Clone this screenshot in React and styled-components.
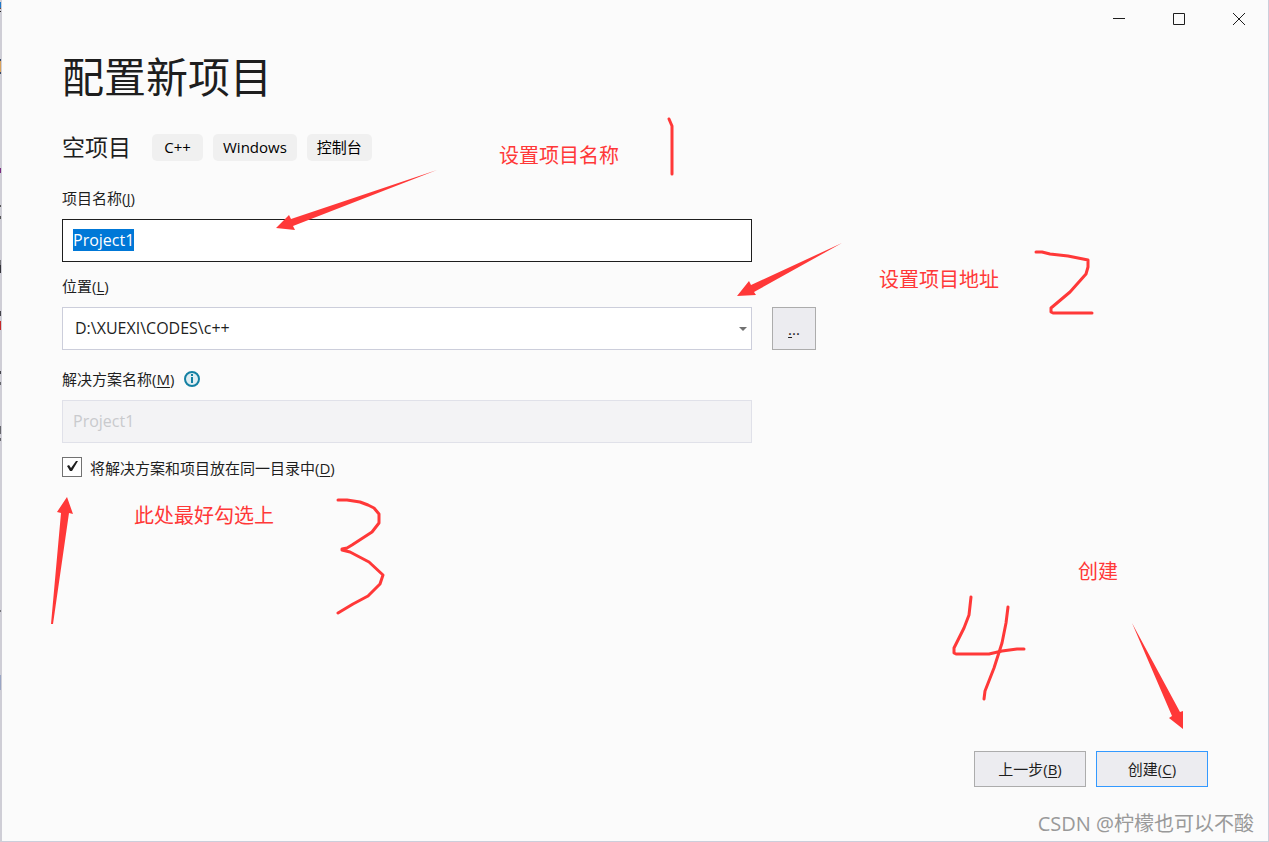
import React, { useEffect, useRef, useState } from "react";
import styled, { createGlobalStyle } from "styled-components";

const tags = ["C++", "Windows", "控制台"];

const notes = [
  { text: "设置项目名称", left: 499, top: 142 },
  { text: "设置项目地址", left: 879, top: 266 },
  { text: "此处最好勾选上", left: 134, top: 502 },
  { text: "创建", left: 1078, top: 558 },
];

const arrows = [
  "276,228 289,215 291,219 437,170 293,226 295,230",
  "737,296 749,281 751,285 842,243 754,292 756,295",
  "67,497 57,512 61,513 51,624 53,624 69,513 73,514",
  "1183,729 1183,711 1180,712 1132,623 1172,716 1169,718",
];

const strokes = [
  "669,119 672,126 672,174",
  "1036,252 1042,252 1050,254 1068,256 1088,260 1088,267 1086,274 1070,292 1051,308 1051,312 1053,313 1092,313",
  "338,500 347,500 360,502 368,505 374,508 379,514 379,523 372,532 352,545 347,548 342,549 342,550 350,552 369,562 383,575 380,584 368,596 353,604 338,613",
  "971,597 969,615 964,628 954,648 954,653 956,654 989,654 1002,651 1017,649 1024,649",
  "1008,607 1006,623 1002,643 994,668 985,691 984,699",
];

const App = () => {
  const [name, setName] = useState("Project1");
  const [sameFolder, setSameFolder] = useState(true);
  const nameRef = useRef(null);

  useEffect(() => {
    nameRef.current.focus();
    nameRef.current.select();
  }, []);

  return (
    <Window>
      <GlobalStyle />
      <TitleBar>
        <CaptionButton aria-label="最小化">
          <svg width="14" height="14" viewBox="0 0 14 14">
            <path d="M1 6.5h12" />
          </svg>
        </CaptionButton>
        <CaptionButton aria-label="最大化">
          <svg width="14" height="14" viewBox="0 0 14 14">
            <path d="M1.5 1.5h11v11h-11z" />
          </svg>
        </CaptionButton>
        <CaptionButton aria-label="关闭">
          <svg width="14" height="14" viewBox="0 0 14 14">
            <path d="M1 1l12 12M13 1L1 13" />
          </svg>
        </CaptionButton>
      </TitleBar>

      <Content>
        <Title>配置新项目</Title>
        <Template>
          <TemplateName>空项目</TemplateName>
          {tags.map((tag) => (
            <Tag key={tag}>{tag}</Tag>
          ))}
        </Template>

        <Field $after={14}>
          <Label htmlFor="name">
            项目名称(<u>J</u>)
          </Label>
          <TextInput
            id="name"
            ref={nameRef}
            value={name}
            onChange={(e) => setName(e.target.value)}
          />
        </Field>

        <Field $after={19}>
          <Label htmlFor="location">
            位置(<u>L</u>)
          </Label>
          <LocationRow>
            <Combo>
              <select id="location" defaultValue="D:\XUEXI\CODES\c++">
                <option>D:\XUEXI\CODES\c++</option>
              </select>
              <svg width="8" height="4" viewBox="0 0 8 4">
                <path d="M0 0h8L4 4z" fill="#717171" />
              </svg>
            </Combo>
            <BrowseButton aria-label="浏览">
              <u>.</u>..
            </BrowseButton>
          </LocationRow>
        </Field>

        <Field $after={14}>
          <LabelRow>
            <Label htmlFor="solution">
              解决方案名称(<u>M</u>)
            </Label>
            <svg width="16" height="16" viewBox="0 0 16 16">
              <circle cx="8" cy="8" r="7" fill="#dfedf2" stroke="#1480a3" strokeWidth="2" />
              <path d="M8 3v2M8 6v6" stroke="#1480a3" strokeWidth="2" />
            </svg>
          </LabelRow>
          <TextInput id="solution" value="Project1" disabled readOnly />
        </Field>

        <CheckRow>
          <CheckBox
            id="same"
            type="checkbox"
            checked={sameFolder}
            onChange={() => setSameFolder(!sameFolder)}
          />
          <Label htmlFor="same">
            将解决方案和项目放在同一目录中(<u>D</u>)
          </Label>
        </CheckRow>
      </Content>

      <Footer>
        <ActionButton>
          上一步(<u>B</u>)
        </ActionButton>
        <ActionButton $primary>
          创建(<u>C</u>)
        </ActionButton>
      </Footer>

      {/* Red pen marks over the dialog */}
      <Marks>
        <svg width="1269" height="842" viewBox="0 0 1269 842">
          {arrows.map((points) => (
            <polygon key={points} points={points} fill="#ff3838" />
          ))}
          {strokes.map((points) => (
            <polyline key={points} points={points} />
          ))}
        </svg>
        {notes.map((note) => (
          <Note key={note.text} $left={note.left} $top={note.top}>
            {note.text}
          </Note>
        ))}
      </Marks>
      <Watermark>CSDN @柠檬也可以不酸</Watermark>
    </Window>
  );
};

// Styled Components
const GlobalStyle = createGlobalStyle`
  * {
    box-sizing: border-box;
  }

  body {
    margin: 0;
    background: #fbfbfb;
    color: #1e1e1e;
    font-family: "Open Sans", "Noto Sans CJK SC", sans-serif;
    font-size: 15px;
  }

  button, input, select {
    font-family: inherit;
    color: inherit;
    border-radius: 0;
  }

  u {
    text-underline-offset: 2px;
  }
`;

const Window = styled.main`
  position: relative;
  display: flex;
  flex-direction: column;
  min-height: 100vh;
  padding-left: 2px;
  overflow: hidden;
  background: #fbfbfb;
  box-shadow: inset 2px 0 #cfced6, inset -1px 0 #cccedb, inset 0 -1px #cccedb;

  /* slice of the window behind, along the left edge */
  &::before {
    content: "";
    position: absolute;
    left: 0;
    top: 0;
    width: 1px;
    height: 100%;
    background: linear-gradient(
      #cfced6 2px, #1f78c8 2px 8px, #7a4630 8px 9px, #cfced6 9px 11px, #222 11px 12px,
      #cfced6 12px 59px, #3a4a66 59px 61px, #d9a25c 61px 72px, #3a4a66 72px 74px,
      #cfced6 74px 168px, #7a2a80 168px 173px, #cfced6 173px 205px, #555 205px 207px,
      #cfced6 207px 216px, #555 216px 219px, #cfced6 219px 260px, #77777c 260px 265px,
      #33333a 265px 273px, #cfced6 273px 311px, #44444a 311px 316px, #cfced6 316px 321px,
      #c62828 321px 330px, #cfced6 330px 371px, #44444a 371px 374px, #cfced6 374px 382px,
      #66666c 382px 385px, #cfced6 385px 426px, #66666c 426px 434px, #cfced6 434px 438px,
      #66666c 438px 441px, #cfced6 441px 610px, #77777c 610px 612px, #cfced6 612px 675px,
      #9ba6c4 675px 690px, #cfced6 690px
    );
  }
`;

const TitleBar = styled.header`
  display: flex;
  justify-content: flex-end;
  height: 38px;
`;

const CaptionButton = styled.button`
  display: flex;
  align-items: center;
  justify-content: center;
  width: 60px;
  padding: 0;
  border: none;
  background: none;

  svg {
    fill: none;
    stroke: #1e1e1e;
  }
`;

const Content = styled.section`
  flex: 1;
  padding: 10px 60px 0;
`;

const Title = styled.h1`
  margin: 0 0 28px;
  font-size: 42px;
  line-height: 58px;
  font-weight: 400;
`;

const Template = styled.div`
  display: flex;
  align-items: center;
  gap: 10px;
  margin-bottom: 27px;
`;

const TemplateName = styled.h2`
  margin: 0 11px 0 0;
  font-size: 23px;
  line-height: 27px;
  font-weight: 400;
`;

const Tag = styled.span`
  min-width: 51px;
  padding: 0 10px;
  border-radius: 5px;
  background: #f0f0f0;
  color: #000;
  font-size: 15px;
  line-height: 27px;
  text-align: center;
`;

const Field = styled.div`
  display: flex;
  flex-direction: column;
  gap: 11px;
  max-width: 754px;
  margin-bottom: ${({ $after }) => $after}px;
`;

const Label = styled.label`
  line-height: 20px;
`;

const LabelRow = styled.div`
  display: flex;
  align-items: center;
  gap: 10px;
`;

const TextInput = styled.input`
  width: 100%;
  max-width: 690px;
  height: 43px;
  padding: 0 10px 2px;
  border: 1px solid #1e1e1e;
  outline: none;
  background: #fff;
  font-size: 16px;

  &::selection {
    background: #0078d7;
    color: #fff;
  }

  &:disabled {
    border-color: #e0e1e9;
    background: #f3f3f5;
    color: #c9cacd;
  }
`;

const LocationRow = styled.div`
  display: flex;
  gap: 20px;
`;

const Combo = styled.div`
  position: relative;
  flex: 1;

  select {
    width: 100%;
    height: 43px;
    padding: 0 12px 2px;
    border: 1px solid #cccedb;
    appearance: none;
    background: #fff;
    font-size: 16px;
  }

  svg {
    position: absolute;
    right: 5px;
    top: 20px;
    pointer-events: none;
  }
`;

const BrowseButton = styled.button`
  width: 44px;
  height: 43px;
  padding: 0;
  border: 1px solid #acacac;
  background: #ececf0;
  font-size: 15px;
`;

const CheckRow = styled.div`
  display: flex;
  gap: 8px;

  label {
    padding-top: 1px;
  }
`;

const CheckBox = styled.input`
  width: 20px;
  height: 20px;
  margin: 0;
  border: 1px solid #717171;
  appearance: none;
  background: #fefefe;

  &:checked {
    background: #fefefe
      url("data:image/svg+xml,%3Csvg xmlns='http://www.w3.org/2000/svg' viewBox='0 0 18 18'%3E%3Cpath d='M4 8l2-1 2 3 5-7h2L9 13H7z' fill='%231e1e1e'/%3E%3C/svg%3E");
  }
`;

const Footer = styled.footer`
  display: flex;
  justify-content: flex-end;
  gap: 10px;
  padding: 0 61px 55px;
`;

const ActionButton = styled.button`
  width: 112px;
  height: 36px;
  padding: 0 0 2px;
  border: 1px solid ${({ $primary }) => ($primary ? "#3399ff" : "#acacac")};
  background: #ececf0;
  font-size: 15px;
`;

const Marks = styled.div`
  position: absolute;
  left: 0;
  top: 0;
  pointer-events: none;

  svg {
    display: block;
  }

  polyline {
    fill: none;
    stroke: #ff3838;
    stroke-width: 3;
    stroke-linecap: round;
    stroke-linejoin: round;
  }
`;

const Note = styled.span`
  position: absolute;
  left: ${({ $left }) => $left}px;
  top: ${({ $top }) => $top}px;
  color: #ff3838;
  font-size: 20px;
  line-height: 28px;
  white-space: nowrap;
`;

const Watermark = styled.div`
  position: absolute;
  right: 15px;
  bottom: 4px;
  color: #999;
  font-size: 20px;
  line-height: 28px;
`;

export default App;
